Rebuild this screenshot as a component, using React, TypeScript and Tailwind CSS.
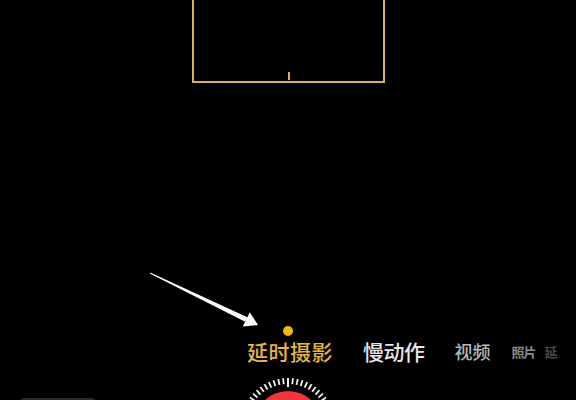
import React from "react";

const cjk = { fontFamily: '"Noto Sans CJK SC", "Noto Sans", sans-serif' };

function Shutter() {
  const cx = 50;
  const cy = 47;
  const ticks = [];
  for (let i = 0; i < 60; i++) {
    const a = (i * 6 * Math.PI) / 180;
    const outer = 47;
    const inner = i === 0 ? 38 : 41;
    ticks.push(
      <line
        key={i}
        x1={cx + Math.sin(a) * inner}
        y1={cy - Math.cos(a) * inner}
        x2={cx + Math.sin(a) * outer}
        y2={cy - Math.cos(a) * outer}
        stroke="#f2f2f2"
        strokeWidth={i === 0 ? 2 : 1.8}
      />
    );
  }
  return (
    <svg width="100" height="94" viewBox="0 0 100 94" className="shrink-0">
      {ticks}
      <circle cx={cx} cy={cy} r="34" fill="#f5333a" />
    </svg>
  );
}

export default function App() {
  return (
    <div className="relative w-[576px] h-[400px] bg-black overflow-hidden" style={cjk}>
      {/* viewfinder frame */}
      <div className="ml-[192px] w-[193px] h-[83px] border-2 border-t-0 border-[#d9b24e] flex items-end justify-center">
        <div className="w-[2px] h-[8px] bg-[#d9b24e] mb-px" />
      </div>

      {/* focus dot */}
      <div className="mt-[243px] ml-[283px] w-[10px] h-[10px] rounded-full bg-[#f5b70f]" />

      {/* mode labels */}
      <div className="mt-[3px] flex items-center h-[24px] pl-[247px] whitespace-nowrap font-medium">
        <span className="text-[21px] leading-none text-[#e9b73a] tracking-[0.5px]">延时摄影</span>
        <span className="ml-[30px] text-[21px] leading-none text-[#e6e6e6] tracking-[-0.5px]">慢动作</span>
        <span className="ml-[30px] text-[18px] leading-none text-[#b8b8b8]">视频</span>
        <span className="ml-[21px] text-[13px] leading-none text-[#8a8a8a] font-bold tracking-[-1px]">照片</span>
        <span className="ml-[9px] text-[13px] leading-none text-[#4a4a4a] font-bold">延</span>
      </div>

      {/* bottom controls */}
      <div className="mt-[15px] relative flex justify-center">
        <Shutter />
        <div className="absolute left-[21px] top-[20px] w-[74px] h-[10px] rounded-t-[3px] bg-[#2b2b2d]" />
      </div>

      {/* annotation arrow */}
      <svg className="absolute left-0 top-0" width="576" height="400" viewBox="0 0 576 400">
        <polygon points="149.8,273.4 150.2,272.6 247.4,317.2 245.2,321.7" fill="#ffffff" />
        <polygon points="258,325 242.8,326.6 249.8,312.2" fill="#ffffff" />
      </svg>
    </div>
  );
}
